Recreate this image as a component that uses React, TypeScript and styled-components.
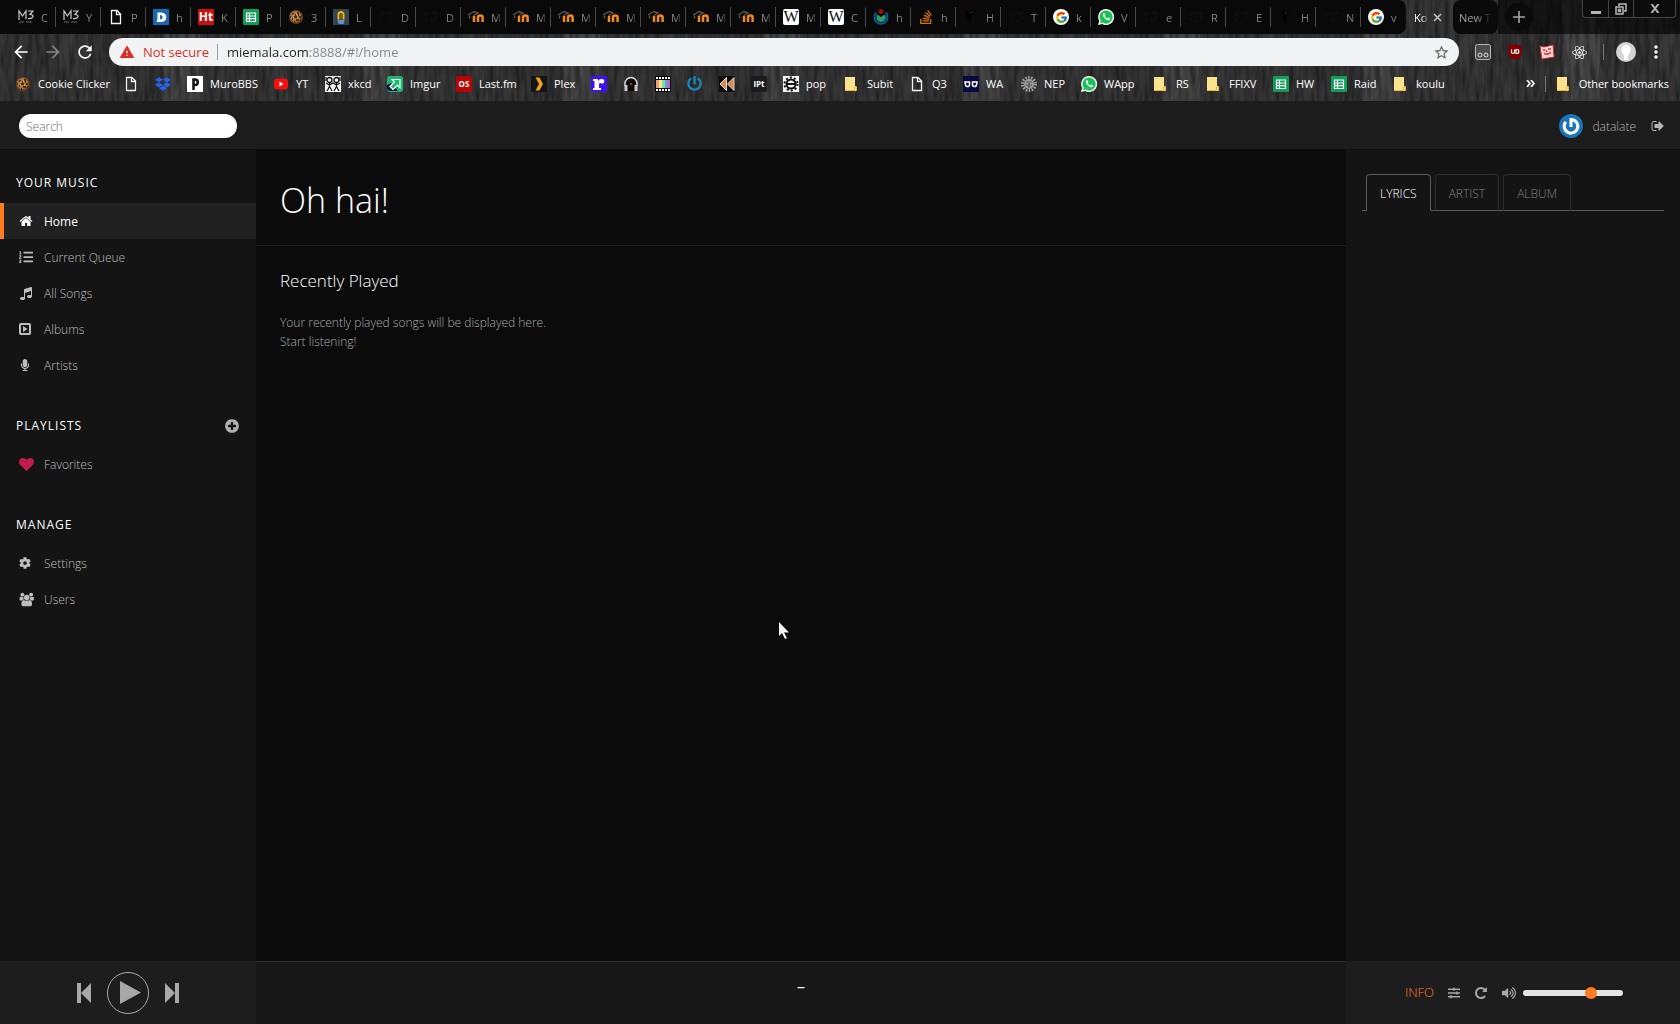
import React from "react";
import styled, { createGlobalStyle } from "styled-components";
import {
  FaCog,
  FaDropbox,
  FaListOl,
  FaMicrophone,
  FaReact,
  FaSlidersH,
  FaVolumeUp,
  FaStackOverflow,
  FaPowerOff,
} from "react-icons/fa";
import { FcGoogle } from "react-icons/fc";
import { MdArrowBack, MdArrowForward, MdMoreVert, MdRefresh, MdStarBorder, MdWarning } from "react-icons/md";

const Global = createGlobalStyle`
  *, *::before, *::after { box-sizing: border-box; }
  body {
    margin: 0;
    background: #0b0b0b;
    color: #b4b4b4;
    font: 300 13px/19px "Open Sans", "Noto Sans", sans-serif;
  }
  button {
    font: inherit;
    color: inherit;
    background: none;
    border: 0;
    padding: 0;
    margin: 0;
    cursor: pointer;
  }
  a { color: inherit; text-decoration: none; }
  ul { list-style: none; margin: 0; padding: 0; }
  h1, h2, p { margin: 0; }
  svg { display: block; flex: none; }
`;

/* ---------- small favicons ---------- */

type Kind =
  | "m3" | "doc" | "disqus" | "ht" | "sheet" | "cookie" | "lamp" | "github" | "moodle"
  | "wiki" | "wikimedia" | "stack" | "bird" | "google" | "whatsapp" | "dropbox" | "muro"
  | "youtube" | "xkcd" | "imgur" | "lastfm" | "plex" | "r" | "phones" | "film" | "power"
  | "rewind" | "ipt" | "gear" | "folder" | "wa" | "nep" | "box" | "ublock" | "note";

const Badge = styled.span<{ $bg: string; $fg?: string; $size?: number; $serif?: boolean; $round?: number }>`
  display: flex;
  align-items: center;
  justify-content: center;
  flex: none;
  width: 16px;
  height: 16px;
  overflow: hidden;
  border-radius: ${(p) => p.$round ?? 0}px;
  background: ${(p) => p.$bg};
  color: ${(p) => p.$fg ?? "#fff"};
  font: ${(p) => (p.$serif ? 400 : 700)} ${(p) => p.$size ?? 12}px/16px
    ${(p) => (p.$serif ? '"Liberation Serif", serif' : '"Open Sans", sans-serif')};
`;

const S = ({ children }: { children: React.ReactNode }) => (
  <svg width="16" height="16" viewBox="0 0 16 16" fill="none" aria-hidden="true">
    {children}
  </svg>
);

const Glyph = ({ kind }: { kind: Kind }) => {
  switch (kind) {
    case "m3":
      return (
        <S>
          <rect width="16" height="16" fill="#0b0b0b" />
          <path d="M1 11V2L4.500 7 8 2v8M10 2h5L12 5.500c4.500 0 4 4.500-2 4" stroke="#c9c9c9" strokeWidth="1.200" />
          <path d="M1 13h5M8 13h6" stroke="#666" />
        </S>
      );
    case "doc":
      return (
        <S>
          <path d="M3.500 1.500h5.500l3.500 3.500v9.500h-9zM8.500 1.500V5.500h4" stroke="#f2f2f2" strokeWidth="1.300" />
        </S>
      );
    case "disqus":
      return (
        <S>
          <rect width="16" height="16" fill="#1668b4" />
          <path d="M3.500 13l1-3V3.500h4c6.500 0 6.500 9.500 0 9.500z" fill="#fff" />
          <path d="M7 6v4.500c3.500 0 3.500-4.500 0-4.500z" fill="#1668b4" />
        </S>
      );
    case "ht":
      return <Badge $bg="#cc0f0f" $size={12}>Ht</Badge>;
    case "sheet":
      return (
        <S>
          <rect width="16" height="16" rx="1" fill="#0f9d58" />
          <path d="M3.500 4h9v8.500h-9zM3.500 7h9M3.500 9.700h9M6.500 4v8.500" stroke="#fff" strokeWidth="1.200" />
        </S>
      );
    case "cookie":
      return (
        <S>
          <circle cx="8" cy="8" r="7" fill="#6b4320" />
          <circle cx="7.500" cy="7.500" r="5.500" fill="#a97842" />
          <path d="M4 5h2M9 4h2M6 8h3M11 8h2M4 10h1M8 11h3M7 6h1M10 6h1M2 8h1M12 11h1M6 13h1" stroke="#2c1809" strokeWidth="1.500" />
          <path d="M5 6h1M8 5h1M9 9h1M5 9h1" stroke="#e8c48f" />
        </S>
      );
    case "lamp":
      return (
        <S>
          <rect width="16" height="16" fill="#35444f" />
          <path d="M5.500 10.500V5.500a2.500 2.500 0 015 0v5" stroke="#efb822" strokeWidth="2" />
          <rect x="6.500" y="5" width="3" height="6" fill="#6d5a10" />
          <path d="M4.500 11h7l-1 4h-5z" fill="#5d94cc" />
        </S>
      );
    case "github":
      return (
        <S>
          <path d="M3 12V6l-.5-3L6 4h4l3.500-1-.5 3v3c0 2-2 3-5 3" stroke="#151515" strokeDasharray="3 2" />
        </S>
      );
    case "moodle":
      return (
        <S>
          <path d="M0 6l6-3.500 4 1.500-4 2.500v4M1.500 6.500v3" stroke="#5c5550" strokeWidth="1.400" />
          <path d="M6 13V7M10 13V8.500q0-2 2.300-2t2.300 2V13" stroke="#f08a1c" strokeWidth="2.500" />
        </S>
      );
    case "wiki":
      return <Badge $bg="#fff" $fg="#111" $size={16} $serif $round={2}>W</Badge>;
    case "wikimedia":
      return (
        <S>
          <path d="M3.500 3.500a6.500 6.500 0 109 0" stroke="#0a5a93" strokeWidth="2" />
          <path d="M4.500 5.500a4.500 4.500 0 007 6 4.500 4.500 0 000-6L8 8z" fill="#2f9b68" />
          <circle cx="8" cy="2.500" r="2.500" fill="#a00c0c" />
        </S>
      );
    case "stack":
      return <FaStackOverflow size={16} color="#d9700f" />;
    case "bird":
      return (
        <S>
          <path d="M2 3q4-3 7 0l3 2-3 1-2 9-2-4-2-5z" fill="#020202" />
          <path d="M7 3.500h2" stroke="#7a1313" />
        </S>
      );
    case "google":
      return (
        <Badge $bg="#fff" $round={8}>
          <FcGoogle size={13} />
        </Badge>
      );
    case "whatsapp":
      return (
        <S>
          <path d="M8 0a8 8 0 11-3.800 15L0 16l1.200-4A8 8 0 018 0z" fill="#fff" />
          <path d="M8 1.400a6.600 6.600 0 11-3.400 12.200L2 14.200l.7-2.500A6.600 6.600 0 018 1.400z" fill="#18c254" />
          <path d="M5.500 4.200c-1.200 1-.8 3 1.200 5s4.200 2.700 5.100 1.400l.2-1.100-1.900-1-1 1C8 9 7.200 8 6.700 7.100l.7-1L6.600 4.200z" fill="#fff" />
        </S>
      );
    case "dropbox":
      return <FaDropbox size={16} color="#2563eb" />;
    case "muro":
      return (
        <S>
          <rect width="16" height="16" fill="#fff" />
          <path d="M6.500 14V3.500h1.500a2.300 2.300 0 010 5.500h-1" stroke="#111" strokeWidth="2.500" />
        </S>
      );
    case "youtube":
      return (
        <S>
          <rect x="1" y="2.500" width="14" height="11" rx="3" fill="#f40e0e" />
          <path d="M6.500 5.500v5l4-2.500z" fill="#fff" />
        </S>
      );
    case "xkcd":
      return (
        <S>
          <rect width="16" height="16" fill="#f4f4f4" />
          <circle cx="4.500" cy="4" r="2.500" stroke="#111" strokeWidth="1.300" />
          <circle cx="11.500" cy="4" r="2.500" stroke="#111" strokeWidth="1.300" />
          <path d="M4.500 6.500v4L2 15M4.500 10.500L7 15M11.500 6.500v4L9 15M11.500 10.500L14 15M1 7l3.500 2L8 7l3.500 2L15 7M1 1v4M15 1v4" stroke="#111" strokeWidth="1.200" />
        </S>
      );
    case "imgur":
      return (
        <S>
          <rect width="16" height="16" rx="3" fill="#1bb76e" />
          <path d="M0 13V9l4-2 7 8H3a3 3 0 01-3-3z" fill="#171544" />
          <path d="M5 3.500h8v8l-2.500-2.500L6 13.500 3 10.500 7.500 6z" fill="#1bb76e" stroke="#fff" strokeWidth="1.200" />
        </S>
      );
    case "lastfm":
      return <Badge $bg="#b90504" $size={8} $round={2}>OS</Badge>;
    case "plex":
      return (
        <S>
          <rect width="16" height="16" fill="#151515" />
          <path d="M4.500 1.500H8.500L12 8l-3.500 6.500H4.500L8 8z" fill="#eaa31b" />
        </S>
      );
    case "r":
      return (
        <S>
          <rect width="16" height="16" fill="#3a12f5" />
          <path d="M2 3h5v2q1.500-2.500 4-2a2.300 2.300 0 11-1.500 4Q8 6.500 8 9v3h2v2H2v-2h1.500V5H2z" fill="#fff" />
        </S>
      );
    case "phones":
      return (
        <S>
          <rect x="2" y="3" width="12" height="12" fill="#0b0b0b" />
          <path d="M2 10V7.500a6 6 0 0112 0V10" stroke="#ddd" strokeWidth="1.500" />
          <path d="M1.500 9h3v6h-3zM11.500 9h3v6h-3z" fill="#c9c9d4" />
          <rect x="7" y="7" width="2" height="2" fill="#e01313" />
        </S>
      );
    case "film":
      return (
        <S>
          <rect width="16" height="16" fill="#0a0a0a" />
          <path d="M1 2h14M1 14h14" stroke="#fff" strokeWidth="2" strokeDasharray="2 1" />
          <rect x="1" y="4" width="3" height="8" fill="#f39d7d" />
          <rect x="4" y="4" width="3" height="8" fill="#f3e98d" />
          <rect x="7" y="4" width="3" height="8" fill="#82dba4" />
          <rect x="10" y="4" width="2" height="8" fill="#6aa2d8" />
          <rect x="12" y="4" width="3" height="8" fill="#a473cf" />
        </S>
      );
    case "power":
      return <FaPowerOff size={15} color="#1787b8" />;
    case "rewind":
      return (
        <S>
          <rect width="16" height="16" fill="#0d0d0d" />
          <path d="M7.500 1.500v13L1 8zM15 1.500v13L8.500 8z" fill="#df8a3c" stroke="#d8d8e6" />
        </S>
      );
    case "ipt":
      return <Badge $bg="#1b1b1d" $size={8} $round={2}>IPt</Badge>;
    case "gear":
      return (
        <S>
          <rect width="16" height="16" fill="#f4f4f4" />
          <circle cx="8" cy="8" r="4.500" stroke="#111" strokeWidth="2" />
          <circle cx="8" cy="8" r="6.500" stroke="#111" strokeWidth="2" strokeDasharray="2 2.100" />
          <path d="M4 8h8" stroke="#111" strokeWidth="2" />
        </S>
      );
    case "folder":
      return (
        <S>
          <path d="M1 1h10v9h1.500v5H1z" fill="#fbe28c" />
          <path d="M1 14.500h9.500V11h2v3.500" stroke="#e5bc40" />
        </S>
      );
    case "wa":
      return (
        <S>
          <rect width="16" height="16" fill="#090840" />
          <path d="M2 6h4.500v2a2 2 0 01-4 1zM9.500 6H14L13.500 9a2 2 0 01-4-1z" stroke="#fff" strokeWidth="1.500" />
        </S>
      );
    case "nep":
      return (
        <S>
          <circle cx="8" cy="8" r="6.500" stroke="#a6a6a6" strokeWidth="3" strokeDasharray="1.500 1.400" />
          <circle cx="8" cy="8" r="5" fill="#9b9b9b" />
          <path d="M5 6h2M9 6h2M5 9h6M7 11h2M8 5v6" stroke="#4c4c4c" />
        </S>
      );
    case "box":
      return (
        <S>
          <rect x=".5" y=".5" width="15" height="15" rx="2" fill="#4b4b4b" stroke="#b5b5b5" />
          <circle cx="5" cy="11" r="2" stroke="#ddd" />
          <circle cx="11" cy="11" r="2" stroke="#ddd" />
        </S>
      );
    case "ublock":
      return (
        <S>
          <path d="M8 0l7 2v6q0 5-7 8-7-3-7-8V2z" fill="#800000" />
          <path d="M4.500 5.500V8q0 1.500 1.500 1.500T7.500 8V5.500M9 5.500v4h1q1.800 0 1.800-2t-1.800-2z" stroke="#fff" strokeWidth="1.200" />
        </S>
      );
    case "note":
      return (
        <S>
          <path d="M1 2l4 1L14 1l1 12-12 2z" fill="#f4d8d8" stroke="#d92b2b" />
          <path d="M4 6h2M9 5h3M5 9q3 3 7-1M7 6l1 2" stroke="#d92b2b" strokeWidth="1.300" />
        </S>
      );
  }
};

/* ---------- browser window ---------- */

const Window = styled.div`
  display: flex;
  flex-direction: column;
  height: 100vh;
`;

const Chrome = styled.header`
  position: relative;
  flex: none;
  font-weight: 400;
  background: #333;
`;

const WoodArt = styled.svg`
  position: absolute;
  inset: 0;
  width: 100%;
  height: 100%;
`;

const Wood = () => (
  <WoodArt aria-hidden="true">
    <defs>
      <filter id="grain" x="0" y="0" width="100%" height="100%">
        <feTurbulence type="fractalNoise" baseFrequency="0.2 0.03" numOctaves="3" seed="4" />
        <feColorMatrix values="0 0 0 0 0  0 0 0 0 0  0 0 0 0 0  0.900 0 0 0 -0.300" />
      </filter>
      <pattern id="planks" width="200" height="102" patternUnits="userSpaceOnUse">
        <rect width="200" height="102" fill="#363636" />
        <rect x="48" width="40" height="102" fill="#393939" />
        <rect x="120" width="42" height="102" fill="#343434" />
        <rect x="162" width="38" height="102" fill="#464646" />
        <rect width="200" height="102" filter="url(#grain)" />
      </pattern>
    </defs>
    <rect width="100%" height="100%" fill="url(#planks)" />
  </WoodArt>
);

const Strip = styled.div`
  position: relative;
  display: flex;
  height: 34px;
`;

const TabGroup = styled.div`
  display: flex;
  flex: 0 1 auto;
  min-width: 0;
  padding-left: 11px;
  background: #090909;
  border-radius: 0 8px 8px 0;
`;

const Tab = styled.button<{ $last?: boolean }>`
  display: flex;
  align-items: center;
  gap: 7px;
  flex: 0 1 45px;
  width: 45px;
  min-width: 0;
  height: 20px;
  margin-top: 7px;
  padding-left: 7px;
  border-right: 1px solid ${(p) => (p.$last ? "transparent" : "#4a4a4a")};
  color: #858585;
  font-size: 11px;
`;

const Clip = styled.span<{ $w: number }>`
  width: ${(p) => p.$w}px;
  overflow: hidden;
  white-space: nowrap;
  text-align: left;
  mask-image: linear-gradient(90deg, #000 50%, transparent);
`;

const ActiveTab = styled.div`
  display: flex;
  align-items: center;
  flex: none;
  padding: 0 8px;
  color: #fff;
  font-size: 11px;
`;

const NewTab = styled.button`
  display: flex;
  align-items: center;
  flex: none;
  padding: 0 6px;
  border-radius: 8px;
  background: #0a0a0a;
  color: #a0a0a0;
  font-size: 11px;
`;

const StripRest = styled.div`
  display: flex;
  flex: 1;
  justify-content: space-between;
  padding: 0 4px 0 7px;
  background: rgba(0, 0, 0, 0.6);
`;

const AddTab = styled.button`
  display: grid;
  place-items: center;
  width: 28px;
  height: 28px;
  margin-top: 3px;
  border-radius: 14px;
  background: #0b0b0b;
  color: #a5a5a5;
`;

const WinButtons = styled.div`
  display: grid;
  grid-template-columns: 25px 25px 42px;
  height: 18px;
  border: 1px solid #454545;
  border-top: 0;
  border-radius: 0 0 4px 4px;
  background: #0c0c0c;
`;

const WinButton = styled.button`
  display: grid;
  place-items: center;
  color: #b5b5b5;
  & + & { border-left: 1px solid #454545; }
`;

const Toolbar = styled.div`
  position: relative;
  display: flex;
  align-items: center;
  gap: 16px;
  height: 36px;
  padding: 0 16px 0 13px;
`;

const ToolbarEnd = styled.div`
  display: flex;
  align-items: center;
  gap: 12px;
`;

const IconButton = styled.button<{ $color?: string }>`
  display: flex;
  align-items: center;
  justify-content: center;
  flex: none;
  width: 16px;
  height: 20px;
  color: ${(p) => p.$color ?? "#fff"};
`;

const MoreButton = styled(IconButton)`
  width: 9px;
`;

const Omnibox = styled.div`
  display: flex;
  align-items: center;
  flex: 1;
  height: 28px;
  padding: 0 10px;
  border-radius: 14px;
  background: #f1f3f4;
`;

const Warn = styled.span`
  display: flex;
  align-items: center;
  gap: 8px;
  padding-right: 8px;
  border-right: 1px solid #9a9da1;
  line-height: 16px;
  color: #d93025;
  font-size: 13px;
`;

const Address = styled.input`
  flex: 1;
  min-width: 0;
  height: 28px;
  padding: 0 9px;
  border: 0;
  outline: 0;
  font: 400 13px "Open Sans", sans-serif;
  color: transparent;
  background: linear-gradient(90deg, #202124 92px, #80868b 92px);
  background-clip: text;
  -webkit-background-clip: text;
`;

const Rule = styled.span`
  flex: none;
  width: 1px;
  height: 16px;
  background: #777;
`;

const Profile = styled.button`
  display: grid;
  place-items: center;
  flex: none;
  width: 20px;
  height: 20px;
  border-radius: 10px;
  background: #d4d4d4;
`;

const Bookmarks = styled.nav`
  position: relative;
  display: flex;
  align-items: center;
  height: 31px;
  padding: 0 11px 4px 15px;
  color: #fff;
  font-size: 11px;
`;

const BookmarkList = styled.ul`
  display: flex;
  flex: 1;
  min-width: 0;
  gap: 16px;
  overflow: hidden;
`;

const BookmarkItem = styled.li<{ $w?: number }>`
  flex: 0 0 ${(p) => p.$w ?? 16}px;
  width: ${(p) => p.$w ?? 16}px;
  min-width: 0;
`;

const Bookmark = styled.a`
  display: flex;
  align-items: center;
  gap: 7px;
  height: 20px;
  white-space: nowrap;
`;

const BookmarkEnd = styled.div`
  display: flex;
  align-items: center;
  gap: 10px;
`;

const tabs: [Kind, string][] = [
  ["m3", "C"], ["m3", "Y"], ["doc", "P"], ["disqus", "h"], ["ht", "K"], ["sheet", "P"],
  ["cookie", "3"], ["lamp", "L"], ["github", "D"], ["github", "D"],
  ["moodle", "M"], ["moodle", "M"], ["moodle", "M"], ["moodle", "M"], ["moodle", "M"],
  ["moodle", "M"], ["moodle", "M"], ["wiki", "M"], ["wiki", "C"], ["wikimedia", "h"],
  ["stack", "h"], ["bird", "H"], ["github", "T"], ["google", "k"], ["whatsapp", "V"],
  ["github", "e"], ["github", "R"], ["github", "E"], ["bird", "H"], ["github", "N"],
  ["google", "v"],
];

/* icon, label, column width */
const bookmarks: [Kind, string, number?][] = [
  ["cookie", "Cookie Clicker", 92], ["doc", ""], ["dropbox", ""], ["muro", "MuroBBS", 70],
  ["youtube", "YT", 36], ["xkcd", "xkcd", 46], ["imgur", "Imgur", 53], ["lastfm", "Last.fm", 59],
  ["plex", "Plex", 44], ["r", ""], ["phones", ""], ["film", ""], ["power", ""], ["rewind", ""],
  ["ipt", ""], ["gear", "pop", 45], ["folder", "Subit", 49], ["doc", "Q3", 38], ["wa", "WA", 42],
  ["nep", "NEP", 44], ["whatsapp", "WApp", 56], ["folder", "RS", 37], ["folder", "FFIXV", 51],
  ["sheet", "HW", 42], ["sheet", "Raid", 46], ["folder", "koulu", 52],
];

const Browser = () => (
  <Chrome>
    <Wood />
    <Strip>
      <TabGroup>
        {tabs.map(([kind, label], i) => (
          <Tab key={i} $last={i === tabs.length - 1}>
            <Glyph kind={kind} />
            <Clip $w={11}>{label}</Clip>
          </Tab>
        ))}
      </TabGroup>
      <ActiveTab>
        <Clip $w={15}>Ko</Clip>
        <IconButton aria-label="Close tab" $color="#c0c0c0">
          <svg width="9" height="9" viewBox="0 0 9 9" stroke="currentColor" strokeWidth="1.600">
            <path d="M1 1l7 7M8 1L1 8" />
          </svg>
        </IconButton>
      </ActiveTab>
      <NewTab>
        <Clip $w={33}>New T</Clip>
      </NewTab>
      <StripRest>
        <AddTab aria-label="New tab">
          <svg width="12" height="12" viewBox="0 0 12 12" stroke="currentColor" strokeWidth="1.600">
            <path d="M6 0v12M0 6h12" />
          </svg>
        </AddTab>
        <WinButtons>
          <WinButton aria-label="Minimize">
            <svg width="12" height="12" viewBox="0 0 12 12"><path d="M1 8h10v3H1z" fill="currentColor" /></svg>
          </WinButton>
          <WinButton aria-label="Restore">
            <svg width="12" height="12" viewBox="0 0 12 12" fill="none" stroke="currentColor" strokeWidth="1.500">
              <path d="M4 3V1h7v7H9M1 4h7v7H1zM3.500 6.500h2v2h-2z" />
            </svg>
          </WinButton>
          <WinButton aria-label="Close">
            <svg width="10" height="9" viewBox="0 0 10 9" stroke="currentColor" strokeWidth="2">
              <path d="M1.500 0l7 9M8.500 0l-7 9" />
            </svg>
          </WinButton>
        </WinButtons>
      </StripRest>
    </Strip>
    <Toolbar>
      <IconButton aria-label="Back"><MdArrowBack size={20} /></IconButton>
      <IconButton aria-label="Forward" $color="#868686"><MdArrowForward size={20} /></IconButton>
      <IconButton aria-label="Reload"><MdRefresh size={20} /></IconButton>
      <Omnibox>
        <Warn>
          <MdWarning size={16} />
          Not secure
        </Warn>
        <Address aria-label="Address" defaultValue="miemala.com:8888/#!/home" />
        <IconButton aria-label="Bookmark this page" $color="#5f6368"><MdStarBorder size={17} /></IconButton>
      </Omnibox>
      <IconButton aria-label="Extension"><Glyph kind="box" /></IconButton>
      <IconButton aria-label="Blocker"><Glyph kind="ublock" /></IconButton>
      <IconButton aria-label="Notes"><Glyph kind="note" /></IconButton>
      <IconButton aria-label="React tools"><FaReact size={15} /></IconButton>
      <ToolbarEnd>
        <Rule />
        <Profile aria-label="Profile">
          <svg width="10" height="16" viewBox="0 0 10 16"><ellipse cx="5" cy="6" rx="4.500" ry="5.500" fill="#fff" /><path d="M3 10h4v6H3z" fill="#fff" /></svg>
        </Profile>
        <IconButton aria-label="Menu"><MdMoreVert size={20} /></IconButton>
      </ToolbarEnd>
    </Toolbar>
    <Bookmarks aria-label="Bookmarks">
      <BookmarkList>
        {bookmarks.map(([kind, label, w], i) => (
          <BookmarkItem key={i} $w={w}>
            <Bookmark href="#" aria-label={label || kind}>
              <Glyph kind={kind} />
              {label}
            </Bookmark>
          </BookmarkItem>
        ))}
      </BookmarkList>
      <BookmarkEnd>
        <MoreButton aria-label="More bookmarks">
          <svg width="9" height="7" viewBox="0 0 9 7" fill="none" stroke="currentColor" strokeWidth="1.600">
            <path d="M1 0l3 3.500L1 7M5 0l3 3.500L5 7" />
          </svg>
        </MoreButton>
        <Rule />
        <Bookmark href="#">
          <Glyph kind="folder" />
          Other bookmarks
        </Bookmark>
      </BookmarkEnd>
    </Bookmarks>
  </Chrome>
);

/* ---------- music app ---------- */

const shapes = {
  home: "M1472 992v480q0 26-19 45t-45 19h-384v-384h-256v384h-384q-26 0-45-19t-19-45v-480q0-1 .5-3t.5-3l575-474 575 474q1 2 1 6zm223-69l-62 74q-8 9-21 11h-3q-13 0-21-7l-692-577-692 577q-12 8-24 7-13-2-21-11l-62-74q-8-10-7-23.500t11-21.500l719-599q32-26 76-26t76 26l244 204v-195q0-14 9-23t23-9h192q14 0 23 9t9 23v408l219 182q10 8 11 21.500t-7 23.500z",
  music: "M1664 224v1120q0 50-34 89t-86 60.500-103.500 32-96.500 10.500-96.500-10.500-103.500-32-86-60.500-34-89 34-89 86-60.500 103.500-32 96.500-10.500q105 0 192 39v-537l-768 237v709q0 50-34 89t-86 60.500-103.500 32-96.500 10.500-96.500-10.500-103.500-32-86-60.500-34-89 34-89 86-60.500 103.500-32 96.500-10.500q105 0 192 39v-967q0-31 19-56.500t49-35.500l832-256q12-4 28-4 40 0 68 28t28 68z",
  heart: "M896 1664q-26 0-44-18l-624-602q-10-8-27.500-26t-55.500-65.500-68-97.500-53.500-121-23.500-138q0-220 127-344t351-124q62 0 126.500 21.500t120 58 95.500 68.500 76 68q36-36 76-68t95.500-68.500 120-58 126.500-21.500q224 0 351 124t127 344q0 221-229 450l-623 600q-18 18-44 18z",
  plus: "M1344 960v-128q0-26-19-45t-45-19h-256v-256q0-26-19-45t-45-19h-128q-26 0-45 19t-19 45v256h-256q-26 0-45 19t-19 45v128q0 26 19 45t45 19h256v256q0 26 19 45t45 19h128q26 0 45-19t19-45v-256h256q26 0 45-19t19-45zm320-64q0 209-103 385.500t-279.500 279.500-385.500 103-385.500-103-279.500-279.500-103-385.500 103-385.500 279.500-279.500 385.500-103 385.500 103 279.500 279.500 103 385.500z",
  repeat: "M1664 256v448q0 26-19 45t-45 19h-448q-42 0-59-40-17-39 14-69l138-138q-148-137-349-137-104 0-198.500 40.500t-163.500 109.500-109.500 163.500-40.500 198.500 40.500 198.500 109.500 163.500 163.500 109.500 198.500 40.500q119 0 225-52t179-147q7-10 23-12 15 0 25 9l137 138q9 8 9.500 20.500t-7.500 22.500q-109 132-264 204.500t-327 72.500q-156 0-298-61t-245-164-164-245-61-298 61-298 164-245 245-164 298-61q147 0 284.500 55.500t244.500 156.500l130-129q29-31 70-14 39 17 39 59z",
  signout: "M704 1440q0 4 1 20t.5 26.500-3 23.500-10 19.500-20.500 6.500h-320q-119 0-203.500-84.500t-84.500-203.500v-704q0-119 84.500-203.500t203.500-84.500h320q13 0 22.500 9.500t9.500 22.500q0 4 1 20t.5 26.500-3 23.500-10 19.500-20.500 6.500h-320q-66 0-113 47t-47 113v704q0 66 47 113t113 47h312l11.500 1 11.500 3 8 5.500 7 9 2 13.500zm928-544q0 26-19 45l-544 544q-19 19-45 19t-45-19-19-45v-288h-448q-26 0-45-19t-19-45v-384q0-26 19-45t45-19h448v-288q0-26 19-45t45-19 45 19l544 544q19 19 19 45z",
  users: "M657 896q-162 5-265 128h-134q-82 0-138-40.500t-56-118.500q0-353 124-353 6 0 43.500 21t97.500 42.500 119 21.500q67 0 133-23-5 37-5 66 0 139 81 256zm1071 637q0 120-73 189.500t-194 69.500h-874q-121 0-194-69.500t-73-189.500q0-53 3.500-103.500t14-109 26.500-108.500 43-97.500 62-81 85.500-53.500 111.500-20q10 0 43 21.500t73 48 107 48 135 21.500 135-21.500 107-48 73-48 43-21.500q61 0 111.500 20t85.500 53.500 62 81 43 97.500 26.500 108.500 14 109 3.500 103.500zm-1024-1277q0 106-75 181t-181 75-181-75-75-181 75-181 181-75 181 75 75 181zm704 384q0 159-112.500 271.500t-271.500 112.500-271.500-112.500-112.500-271.500 112.500-271.500 271.500-112.500 271.500 112.500 112.500 271.500zm576 225q0 78-56 118.500t-138 40.500h-134q-103-123-265-128 81-117 81-256 0-29-5-66 66 23 133 23 59 0 119-21.500t97.500-42.500 43.500-21q124 0 124 353zm-128-609q0 106-75 181t-181 75-181-75-75-181 75-181 181-75 181 75 75 181z",
};

const Shape = ({ name, size = 14, box = "0 0 1792 1792" }: { name: keyof typeof shapes; size?: number; box?: string }) => (
  <svg width={size} height={size} viewBox={box} fill="currentColor" aria-hidden="true">
    <path d={shapes[name]} />
  </svg>
);

const AppHeader = styled.div`
  display: flex;
  align-items: center;
  justify-content: space-between;
  flex: none;
  height: 49px;
  padding: 2px 15px 0 19px;
  background: #1c1c1c;
  border-bottom: 1px solid #0d0d0d;
`;

const Search = styled.input`
  width: 218px;
  height: 24px;
  padding: 0 7px;
  border: 0;
  border-radius: 12px;
  outline: 0;
  background: #fff;
  color: #222;
  font: 300 12px "Open Sans", sans-serif;
  &::placeholder { color: #6e6e6e; }
`;

const Account = styled.div`
  display: flex;
  align-items: center;
  gap: 9px;
  font-size: 12px;
`;

const AccountLink = styled.a`
  display: flex;
  align-items: center;
  gap: 9px;
  padding-right: 6px;
`;

const Body = styled.div`
  display: grid;
  grid-template-columns: 256px minmax(0, 1fr) 334px;
  grid-template-rows: minmax(0, 1fr) 63px;
  flex: 1;
  min-height: 0;
`;

const Sidebar = styled.nav`
  padding-top: 22px;
  background: #141414;
`;

const Section = styled.section`
  & + & { padding-top: 32px; }
`;

const SectionTitle = styled.h2`
  display: flex;
  align-items: center;
  justify-content: space-between;
  margin-bottom: 10px;
  padding: 0 16px;
  color: #fff;
  font: 400 12px/21px "Open Sans", sans-serif;
  letter-spacing: 1px;
`;

const AddButton = styled.button`
  color: #b0b0b0;
`;

const SideLink = styled.a<{ $active?: boolean }>`
  display: flex;
  align-items: center;
  height: 36px;
  padding-left: 15px;
  border-left: 4px solid ${(p) => (p.$active ? "#ff7d20" : "transparent")};
  background: ${(p) => (p.$active ? "#212121" : "none")};
  color: ${(p) => (p.$active ? "#fff" : "#bebebe")};
  font-weight: ${(p) => (p.$active ? 400 : 300)};
  font-size: 12px;
`;

const SideIcon = styled.span<{ $color?: string }>`
  display: flex;
  flex: 0 0 25px;
  color: ${(p) => p.$color ?? "inherit"};
`;

const Main = styled.main`
  background: #0b0b0b;
`;

const Hero = styled.div`
  height: 96px;
  padding: 26px 24px;
  border-bottom: 1px solid #1e1e1e;
`;

const Title = styled.h1`
  color: #fff;
  font: 300 34px/48px "Open Sans", sans-serif;
`;

const Content = styled.section`
  padding: 23px 24px;
  color: #ababab;
  font-size: 12px;
`;

const Subtitle = styled.h2`
  margin-bottom: 20px;
  color: #fff;
  font: 300 17px/24px "Open Sans", sans-serif;
`;

const Extra = styled.aside`
  padding: 24px 16px;
  background: #141414;
`;

const ExtraTabs = styled.div`
  display: flex;
  gap: 4px;
  padding-left: 4px;
  border-bottom: 1px solid #5c5c5c;
`;

const ExtraTab = styled.button<{ $active?: boolean }>`
  height: 37px;
  padding: 2px 13px 0;
  margin-bottom: -1px;
  border: 1px solid ${(p) => (p.$active ? "#5c5c5c" : "#2d2d2d")};
  border-bottom-color: ${(p) => (p.$active ? "#141414" : "#5c5c5c")};
  border-radius: 4px 4px 0 0;
  color: ${(p) => (p.$active ? "#fff" : "#808080")};
  font-size: 12px;
`;

const Controls = styled.div`
  display: flex;
  align-items: center;
  justify-content: center;
  gap: 15px;
  background: #1d1d1d;
  color: #a8a8a8;
`;

const PlayButton = styled.button`
  display: grid;
  place-items: center;
  width: 42px;
  height: 42px;
  padding-left: 4px;
  border: 1px solid #a8a8a8;
  border-radius: 50%;
`;

const NowPlaying = styled.div`
  padding-top: 15px;
  background: #171717;
  border-top: 1px solid #2c2c2c;
  color: #fff;
  font-weight: 400;
  font-size: 16px;
  text-align: center;
`;

const Options = styled.div`
  display: flex;
  align-items: center;
  justify-content: flex-end;
  gap: 14px;
  padding-right: 57px;
  background: #1d1d1d;
  color: #a8a8a8;
`;

const InfoButton = styled.button`
  color: #ff7d20;
  font-size: 13px;
`;

const VolumeGroup = styled.div`
  display: flex;
  align-items: center;
  gap: 7px;
`;

const Slider = styled.input`
  appearance: none;
  width: 100px;
  height: 6px;
  margin: 0;
  border-radius: 3px;
  background: #e4e4e2;
  &::-webkit-slider-thumb {
    appearance: none;
    width: 12px;
    height: 12px;
    border-radius: 50%;
    background: #ff7d20;
  }
`;

const Pointer = styled.svg`
  position: absolute;
  left: 779px;
  top: 622px;
  pointer-events: none;
`;

const AlbumIcon = () => (
  <svg width="12" height="12" viewBox="0 0 12 12" fill="none" aria-hidden="true">
    <rect x="1" y="1" width="10" height="10" rx="1" stroke="currentColor" strokeWidth="2" />
    <path d="M4 3l4.500 3L4 9z" fill="currentColor" />
  </svg>
);

export default function App() {
  return (
    <Window>
      <Global />
      <Browser />
      <AppHeader>
        <Search type="search" placeholder="Search" aria-label="Search" />
        <Account>
          <AccountLink href="#">
            <svg width="24" height="24" viewBox="0 0 24 24" fill="none" aria-hidden="true">
              <circle cx="12" cy="12" r="12" fill="#1b75b9" />
              <path d="M12 4v9M12 5.500a6.800 6.800 0 11-5.200 2.400" stroke="#fff" strokeWidth="3" />
            </svg>
            datalate
          </AccountLink>
          <button aria-label="Log out"><Shape name="signout" /></button>
        </Account>
      </AppHeader>
      <Body>
        <Sidebar>
          <Section>
            <SectionTitle>YOUR MUSIC</SectionTitle>
            <SideLink href="#" $active><SideIcon><Shape name="home" /></SideIcon>Home</SideLink>
            <SideLink href="#"><SideIcon><FaListOl size={14} /></SideIcon>Current Queue</SideLink>
            <SideLink href="#"><SideIcon><Shape name="music" /></SideIcon>All Songs</SideLink>
            <SideLink href="#"><SideIcon><AlbumIcon /></SideIcon>Albums</SideLink>
            <SideLink href="#"><SideIcon><FaMicrophone size={12} /></SideIcon>Artists</SideLink>
          </Section>
          <Section>
            <SectionTitle>
              PLAYLISTS
              <AddButton aria-label="New playlist"><Shape name="plus" size={16} /></AddButton>
            </SectionTitle>
            <SideLink href="#"><SideIcon $color="#bf1d4b"><Shape name="heart" size={15} /></SideIcon>Favorites</SideLink>
          </Section>
          <Section>
            <SectionTitle>MANAGE</SectionTitle>
            <SideLink href="#"><SideIcon><FaCog size={12} /></SideIcon>Settings</SideLink>
            <SideLink href="#"><SideIcon><Shape name="users" size={15} box="0 0 1984 1792" /></SideIcon>Users</SideLink>
          </Section>
        </Sidebar>
        <Main>
          <Hero><Title>Oh hai!</Title></Hero>
          <Content>
            <Subtitle>Recently Played</Subtitle>
            <p>Your recently played songs will be displayed here.</p>
            <p>Start listening!</p>
          </Content>
        </Main>
        <Extra>
          <ExtraTabs role="tablist">
            <ExtraTab role="tab" aria-selected="true" $active>LYRICS</ExtraTab>
            <ExtraTab role="tab" aria-selected="false">ARTIST</ExtraTab>
            <ExtraTab role="tab" aria-selected="false">ALBUM</ExtraTab>
          </ExtraTabs>
        </Extra>
        <Controls>
          <button aria-label="Previous">
            <svg width="15" height="20" viewBox="0 0 15 20" fill="currentColor"><path d="M0 0h4v20H0zM14 0v20L4 10z" /></svg>
          </button>
          <PlayButton aria-label="Play">
            <svg width="21" height="23" viewBox="0 0 21 23" fill="currentColor"><path d="M0 0l21 11.500L0 23z" /></svg>
          </PlayButton>
          <button aria-label="Next">
            <svg width="15" height="20" viewBox="0 0 15 20" fill="currentColor"><path d="M11 0h4v20h-4zM1 0v20L11 10z" /></svg>
          </button>
        </Controls>
        <NowPlaying>–</NowPlaying>
        <Options>
          <InfoButton>INFO</InfoButton>
          <button aria-label="Equalizer"><FaSlidersH size={12} /></button>
          <button aria-label="Repeat"><Shape name="repeat" /></button>
          <VolumeGroup>
            <button aria-label="Mute"><FaVolumeUp size={14} /></button>
            <Slider type="range" min={0} max={100} defaultValue={70} aria-label="Volume" />
          </VolumeGroup>
        </Options>
      </Body>
      <Pointer width="12" height="18" viewBox="0 0 12 18" aria-hidden="true">
        <path d="M0 0v14l3-3 3 6 2-1-3-5.500h5z" fill="#f4f4f4" />
      </Pointer>
    </Window>
  );
}
